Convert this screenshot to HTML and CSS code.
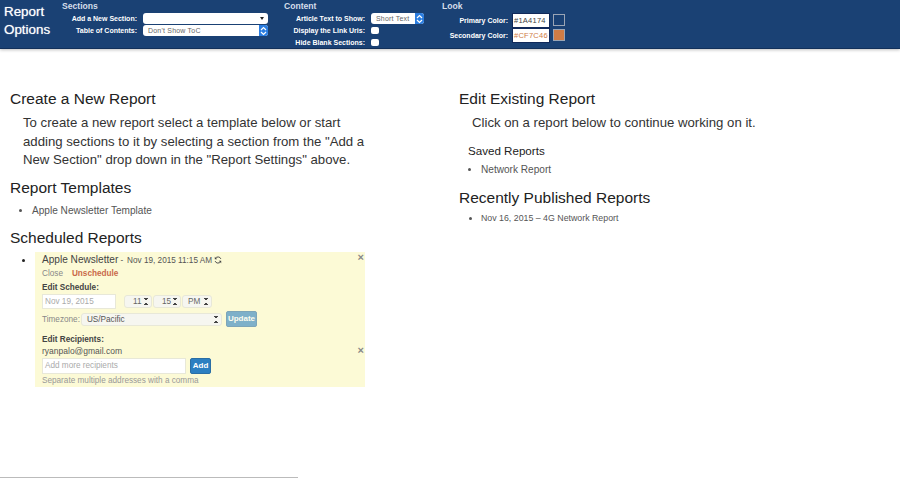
FILE: index.html
```html
<!DOCTYPE html>
<html lang="en">
<head>
    <meta charset="UTF-8">
    <title>Report Options</title>
    <link rel="stylesheet" href="styles.css">
</head>
<body>
    <header class="options">
        <h1 class="options-title">Report Options</h1>

        <section class="group group-sections">
            <h2>Sections</h2>
            <div class="row">
                <label>Add a New Section:</label>
                <div class="select select-wide select-plain"><span></span><i class="caret"></i></div>
            </div>
            <div class="row">
                <label>Table of Contents:</label>
                <div class="select select-wide"><span>Don't Show ToC</span><i class="stepper"><svg width="7" height="10" viewBox="0 0 7 10"><path d="M1 4l2.5-2.5L6 4M1 6l2.5 2.5L6 6" fill="none" stroke="#fff" stroke-width="1.2"/></svg></i></div>
            </div>
        </section>

        <section class="group group-content">
            <h2>Content</h2>
            <div class="row">
                <label>Article Text to Show:</label>
                <div class="select select-short"><span>Short Text</span><i class="stepper"><svg width="7" height="10" viewBox="0 0 7 10"><path d="M1 4l2.5-2.5L6 4M1 6l2.5 2.5L6 6" fill="none" stroke="#fff" stroke-width="1.2"/></svg></i></div>
            </div>
            <div class="row">
                <label>Display the Link Uris:</label>
                <span class="check"></span>
            </div>
            <div class="row">
                <label>Hide Blank Sections:</label>
                <span class="check"></span>
            </div>
        </section>

        <section class="group group-look">
            <h2>Look</h2>
            <div class="row">
                <label>Primary Color:</label>
                <span class="color-input">#1A4174</span>
                <span class="swatch swatch-primary"></span>
            </div>
            <div class="row">
                <label>Secondary Color:</label>
                <span class="color-input color-input-secondary">#CF7C46</span>
                <span class="swatch swatch-secondary"></span>
            </div>
        </section>
    </header>

    <main class="columns">
        <div class="column">
            <h3>Create a New Report</h3>
            <p class="intro">To create a new report select a template below or start adding sections to it by selecting a section from the "Add a New Section" drop down in the "Report Settings" above.</p>

            <h3>Report Templates</h3>
            <ul class="list">
                <li>Apple Newsletter Template</li>
            </ul>

            <h3 class="scheduled-heading">Scheduled Reports</h3>
            <ul class="schedule-list">
                <li>
                    <div class="card">
                        <span class="dismiss dismiss-top">&times;</span>
                        <div class="card-title">
                            <span class="card-name">Apple Newsletter</span> -
                            <span class="card-date">Nov 19, 2015 11:15 AM</span>
                            <svg class="refresh" width="8" height="8" viewBox="0 0 10 10"><path d="M8.6 3.6A3.8 3.8 0 0 0 1.8 3M1.4 6.4A3.8 3.8 0 0 0 8.2 7" fill="none" stroke="#444" stroke-width="1.2"/><path d="M1 1v3h3zM9 9V6H6z" fill="#444"/></svg>
                        </div>
                        <div class="card-links"><span>Close</span><b>Unschedule</b></div>
                        <div class="card-label">Edit Schedule:</div>
                        <div class="card-when">
                            <span class="field field-date">Nov 19, 2015</span>
                            <span class="mini">11<i class="updown"></i></span>
                            <span class="mini">15<i class="updown"></i></span>
                            <span class="mini mini-wide">PM<i class="updown"></i></span>
                        </div>
                        <div class="card-zone">
                            <span>Timezone:</span>
                            <span class="zone-select">US/Pacific<i class="updown"></i></span>
                            <span class="btn btn-off">Update</span>
                        </div>
                        <div class="card-label card-label-recipients">Edit Recipients:</div>
                        <div class="recipient">ryanpalo@gmail.com<span class="dismiss">&times;</span></div>
                        <div class="card-add">
                            <span class="field field-recipients">Add more recipients</span>
                            <span class="btn btn-add">Add</span>
                        </div>
                        <div class="card-hint">Separate multiple addresses with a comma</div>
                    </div>
                </li>
            </ul>
        </div>

        <div class="column">
            <h3>Edit Existing Report</h3>
            <p class="intro">Click on a report below to continue working on it.</p>
            <h4>Saved Reports</h4>
            <ul class="list list-saved">
                <li>Network Report</li>
            </ul>
            <h3 class="published-heading">Recently Published Reports</h3>
            <ul class="list list-small">
                <li>Nov 16, 2015 &ndash; 4G Network Report</li>
            </ul>
        </div>
    </main>

    <div class="scrollbar"></div>
</body>
</html>
```

FILE: styles.css
```css
html, body {
    margin: 0;
    padding: 0;
    height: 478px;
    overflow: hidden;
    background: #fff;
    font-family: 'Liberation Sans', Arial, sans-serif;
    color: #222;
}

/* Top options bar */
.options {
    height: 49px;
    box-sizing: border-box;
    display: flex;
    background: #1a4174;
    color: #fff;
    border-bottom: 1px solid #12305a;
    box-shadow: 0 1px 3px rgba(0, 0, 0, 0.25);
}

.options-title {
    width: 58px;
    margin: 0;
    padding: 3px 0 0 4px;
    font-size: 13.4px;
    font-weight: normal;
    line-height: 18px;
    text-shadow: 0 0 1px rgba(255, 255, 255, 0.7);
}

.group h2 {
    margin: 0 0 0.5px;
    font-size: 8.6px;
    line-height: 12px;
    font-weight: bold;
    color: #d5deea;
}

.group-sections { width: 222px; }
.group-content { width: 158px; }
.group-look { width: 200px; }

.row {
    display: flex;
    align-items: center;
    height: 12px;
}

.row label {
    font-size: 7px;
    font-weight: bold;
    text-align: right;
    white-space: nowrap;
    flex-shrink: 0;
}

.group-sections .row label { width: 75px; margin-right: 6px; }
.group-content .row label { width: 81px; margin-right: 6px; }
.group-look .row { height: 15px; }
.group-look .row label { width: 66px; margin-right: 4px; }

.select {
    display: flex;
    align-items: center;
    justify-content: space-between;
    height: 11px;
    box-sizing: border-box;
    background: #fff;
    border-radius: 3px;
    font-size: 7px;
    color: #666;
    letter-spacing: 0.2px;
    overflow: hidden;
}

.select span { padding-left: 5px; }
.select-wide { width: 125px; }
.select-short { width: 53px; }

.stepper {
    display: flex;
    align-items: center;
    justify-content: center;
    width: 9px;
    height: 100%;
    background: #2a7de1;
}

.caret {
    margin-right: 4px;
    border-left: 2.5px solid transparent;
    border-right: 2.5px solid transparent;
    border-top: 3px solid #222;
}

.check {
    width: 8px;
    height: 7px;
    background: #fff;
    border-radius: 2px;
}

.color-input {
    width: 38px;
    height: 15px;
    box-sizing: border-box;
    padding-left: 1px;
    background: #fff;
    border: 1px solid #10295a;
    color: #444;
    font-size: 7.5px;
    line-height: 13px;
    letter-spacing: 0.25px;
}

.color-input-secondary { color: #cf7c46; }

.swatch {
    width: 12px;
    height: 12px;
    box-sizing: border-box;
    margin-left: 3px;
    border: 1px solid #9aa5b5;
}

.swatch-primary { background: #1a4174; }
.swatch-secondary { background: #cf7c46; }

/* Page columns */
.columns {
    display: grid;
    grid-template-columns: 449px 441px;
    padding: 41px 0 0 10px;
}

h3 {
    margin: 0;
    font-size: 15.5px;
    font-weight: normal;
    line-height: 18px;
    color: #222;
}

h4 {
    margin: 10px 0 0 9px;
    font-size: 11.6px;
    font-weight: normal;
    line-height: 16px;
}

.intro {
    margin: 6px 0 9px 13px;
    width: 350px;
    font-size: 13.2px;
    line-height: 18.5px;
    color: #333;
}

.list {
    margin: 7px 0 12px;
    padding: 0 0 0 22px;
    font-size: 10.1px;
    line-height: 13px;
    color: #555;
}

.list-saved { margin-top: 4.5px; }
.list-small { margin-top: 5px; font-size: 8.8px; }
.published-heading { margin-top: 12.5px; }
.scheduled-heading { margin-top: 1px; }

/* Scheduled report card */
.schedule-list {
    margin: 5px 0 0;
    padding: 0 0 0 25px;
    font-size: 11px;
}

.card {
    position: relative;
    width: 330px;
    height: 135px;
    box-sizing: border-box;
    padding: 1px 7px 0;
    background: #fcfad6;
    font-size: 8.2px;
    color: #888;
}

.dismiss {
    color: #888;
    font-size: 11px;
    font-weight: bold;
    line-height: 10px;
}

.dismiss-top {
    position: absolute;
    top: 0;
    right: 1px;
}

.card-title {
    height: 13px;
    line-height: 13px;
    color: #555;
}

.card-name {
    font-size: 10.1px;
    color: #444;
}

.card-date { margin-left: 1.5px; }
.refresh { vertical-align: -1px; }

.card-links {
    display: flex;
    gap: 9px;
    height: 14px;
    margin-top: 1px;
    line-height: 14px;
}

.card-links b { color: #c9694a; }

.card-label {
    height: 12px;
    margin-top: 1px;
    font-weight: bold;
    line-height: 12px;
    color: #444;
}

.card-label-recipients {
    height: 11px;
    margin-top: 7px;
}

.card-when {
    display: flex;
    align-items: center;
    gap: 1px;
}

.field {
    box-sizing: border-box;
    background: #fff;
    border: 1px solid #e8e8d8;
    padding-left: 2px;
    color: #aaa;
}

.field-date {
    width: 74px;
    height: 15px;
    margin-right: 7px;
    line-height: 13px;
}

.field-recipients {
    width: 144px;
    height: 16px;
    line-height: 14px;
}

.mini {
    position: relative;
    width: 28px;
    height: 13px;
    box-sizing: border-box;
    padding-left: 8px;
    background: #f6f6f0;
    border: 1px solid #e8e8d8;
    border-radius: 3px;
    line-height: 11px;
    color: #666;
}

.mini-wide {
    width: 30px;
    padding-left: 5px;
}

.updown {
    position: absolute;
    top: 2px;
    right: 3px;
    width: 4px;
    height: 7px;
    background:
        linear-gradient(to top right, transparent 50%, #444 50%) 0 0 / 2px 3px no-repeat,
        linear-gradient(to top left, transparent 50%, #444 50%) 2px 0 / 2px 3px no-repeat,
        linear-gradient(to bottom right, transparent 50%, #444 50%) 0 4px / 2px 3px no-repeat,
        linear-gradient(to bottom left, transparent 50%, #444 50%) 2px 4px / 2px 3px no-repeat;
}

.card-zone {
    display: flex;
    align-items: center;
    gap: 1px;
    height: 15px;
    margin-top: 3px;
}

.zone-select {
    position: relative;
    width: 141px;
    height: 13px;
    box-sizing: border-box;
    padding-left: 5px;
    background: #f6f6f0;
    border: 1px solid #e8e8d8;
    border-radius: 3px;
    line-height: 11px;
    color: #555;
    margin-right: 3px;
}

.btn {
    height: 14px;
    padding: 0 1px;
    background: #2c7fc1;
    border: 1px solid #2a6ea5;
    border-radius: 2px;
    color: #fff;
    font-size: 8px;
    font-weight: bold;
    line-height: 14px;
    text-align: center;
}

.btn-off { opacity: 0.6; }
.btn-add { width: 17px; }

.recipient {
    display: flex;
    justify-content: space-between;
    height: 12px;
    margin-right: -6px;
    font-size: 8.5px;
    line-height: 12px;
    color: #555;
}

.card-add {
    display: flex;
    align-items: center;
    gap: 4px;
    margin-top: 1px;
}

.card-hint {
    margin-top: 1px;
    line-height: 12px;
    color: #999;
}

/* Horizontal scrollbar thumb along the window's bottom edge */
.scrollbar {
    position: fixed;
    left: 0;
    bottom: 0;
    width: 298px;
    height: 1px;
    background: #bbb;
}
```
